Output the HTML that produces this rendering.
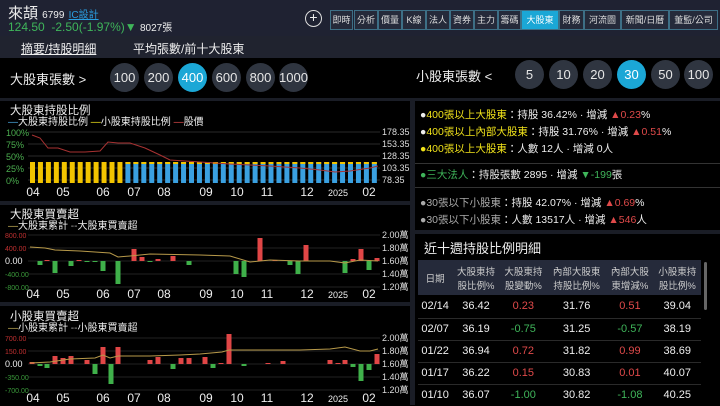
<!DOCTYPE html><html><head><meta charset="utf-8"><style>
*{margin:0;padding:0;box-sizing:border-box}
body{width:720px;height:405px;overflow:hidden;background:#000;font-family:"Liberation Sans","Noto Sans CJK TC",sans-serif;color:#eee;position:relative}
.a{position:absolute;white-space:nowrap}
.c{position:absolute;width:29px;height:29px;border-radius:50%;background:#2f3540;color:#e6e6e6;font-size:13px;line-height:29px;text-align:center}
.c.s{background:#1ba7d6;color:#fff}
.tab{position:absolute;top:10px;height:20px;border:1px solid #3d6f86;background:#252a3a;font-size:9px;line-height:18px;text-align:center;color:#ddd}
.tab.s{background:#1ba7d6;color:#fff}
.y{color:#f0e21a}.r{color:#e04a4a}.g{color:#3fb55a}.gr{color:#aaa}
.info{font-size:10.5px;left:420px}
.lg{font-size:10px;line-height:12px}
td{font-size:11px;text-align:center}
</style></head><body>
<div class="a" style="left:0;top:0;width:720px;height:36px;background:#1f2232"></div>
<div class="a" style="left:0;top:36px;width:720px;height:22px;background:#20232f"></div>
<div class="a" style="left:8px;top:2px;font-size:15px">來頡 <span style="font-size:10px">6799</span> <span style="font-size:10px;color:#2a9ee0;text-decoration:underline">IC設計</span></div>
<div class="a" style="left:8px;top:19px;font-size:12px;color:#3fb55a">124.50 &nbsp;-2.50(-1.97%)▼ <span style="color:#eee;font-size:10px">8027張</span></div>
<div class="a" style="left:305px;top:10px;width:17px;height:17px;border:1.5px solid #ddd;border-radius:50%;font-size:14px;line-height:13px;text-align:center">+</div>
<div class="tab" style="left:330px;width:23px">即時</div><div class="tab" style="left:354px;width:24px">分析</div><div class="tab" style="left:378px;width:24px">價量</div><div class="tab" style="left:402px;width:24px">K線</div><div class="tab" style="left:426px;width:24px">法人</div><div class="tab" style="left:450px;width:24px">資券</div><div class="tab" style="left:474px;width:24px">主力</div><div class="tab" style="left:498px;width:23px">籌碼</div><div class="tab s" style="left:521px;width:38px">大股東</div><div class="tab" style="left:559px;width:25px">財務</div><div class="tab" style="left:584px;width:37px">河流圖</div><div class="tab" style="left:621px;width:48px">新聞/日曆</div><div class="tab" style="left:669px;width:49px">董監/公司</div>
<div class="a" style="left:21px;top:40px;font-size:12px;text-decoration:underline">摘要/持股明細</div>
<div class="a" style="left:133px;top:40px;font-size:12px">平均張數/前十大股東</div>
<div class="a" style="left:10px;top:69px;font-size:13px">大股東張數 &gt;</div>
<div class="c" style="left:110px;top:63px">100</div><div class="c" style="left:144px;top:63px">200</div><div class="c s" style="left:178px;top:63px">400</div><div class="c" style="left:212px;top:63px">600</div><div class="c" style="left:246px;top:63px">800</div><div class="c" style="left:279px;top:63px">1000</div>
<div class="a" style="left:416px;top:66px;font-size:13px">小股東張數 &lt;</div>
<div class="c" style="left:515px;top:60px">5</div><div class="c" style="left:549px;top:60px">10</div><div class="c" style="left:583px;top:60px">20</div><div class="c s" style="left:617px;top:60px">30</div><div class="c" style="left:651px;top:60px">50</div><div class="c" style="left:684px;top:60px">100</div>
<div class="a" style="left:0;top:98px;width:720px;height:3px;background:#1a1d26"></div>
<div class="a" style="left:410px;top:98px;width:5px;height:307px;background:#1a1d26"></div>
<div class="a" style="left:0;top:201px;width:410px;height:4px;background:#1a1d26"></div>
<div class="a" style="left:0;top:302px;width:410px;height:4px;background:#1a1d26"></div>
<svg class="a" style="left:0;top:0" width="410" height="405" id="sv" font-family="Liberation Sans,Noto Sans CJK TC,sans-serif"></svg>
<div class="a" style="left:10px;top:102px;font-size:11.5px">大股東持股比例</div>
<div class="a lg" style="left:8px;top:117px"><span style="color:#4aa8e0">—</span>大股東持股比例 <span class="y">—</span>小股東持股比例 <span class="r">—</span>股價</div>
<div class="a" style="left:10px;top:206px;font-size:11.5px">大股東買賣超</div>
<div class="a lg" style="left:8px;top:221px"><span style="color:#c8b25a">—</span>大股東累計 <span class="gr">--</span>大股東買賣超</div>
<div class="a" style="left:10px;top:308px;font-size:11.5px">小股東買賣超</div>
<div class="a lg" style="left:8px;top:323px"><span style="color:#c8b25a">—</span>小股東累計 <span class="gr">--</span>小股東買賣超</div>
<div class="a info" style="top:107px">●<span class="y">400張以上大股東</span>：持股 36.42% · 增減 <span class="r">▲0.23</span>%</div>
<div class="a info" style="top:124px">●<span class="y">400張以上內部大股東</span>：持股 31.76% · 增減 <span class="r">▲0.51</span>%</div>
<div class="a info" style="top:141px"><span class="y">●400張以上大股東</span>：人數 12人 · 增減 0人</div>
<div class="a" style="left:415px;top:163px;width:305px;height:1px;background:#333"></div>
<div class="a info" style="top:167px"><span class="g">●三大法人</span>：持股張數 2895 · 增減 <span class="g">▼-199</span>張</div>
<div class="a" style="left:415px;top:187px;width:305px;height:1px;background:#333"></div>
<div class="a info" style="top:195px"><span class="gr">●30張以下小股東</span>：持股 42.07% · 增減 <span class="r">▲0.69</span>%</div>
<div class="a info" style="top:212px"><span class="gr">●30張以下小股東</span>：人數 13517人 · 增減 <span class="r">▲546</span>人</div>
<div class="a" style="left:415px;top:230px;width:305px;height:4px;background:#1a1d26"></div>
<div class="a" style="left:424px;top:238px;font-size:13px">近十週持股比例明細</div>
<div class="a" style="left:418px;top:260px;width:283px;height:35px;background:#252a3a"></div>
<div class="a" style="left:704px;top:262px;width:3px;height:48px;background:#666;border-radius:2px"></div>
<table class="a" style="left:418px;top:260px;width:283px;border-collapse:collapse">
<tr style="height:35px;color:#ccc"><td style="font-size:9.5px">日期</td><td style="font-size:9.5px">大股東持<br>股比例%</td><td style="font-size:9.5px">大股東持<br>股變動%</td><td style="font-size:9.5px">內部大股東<br>持股比例%</td><td style="font-size:9.5px">內部大股<br>東增減%</td><td style="font-size:9.5px">小股東持<br>股比例%</td></tr>
<tr style="height:23px;border-bottom:1px solid #2a2a2a"><td>02/14</td><td>36.42</td><td class="r">0.23</td><td>31.76</td><td class="r">0.51</td><td>39.04</td></tr>
<tr style="height:22px;border-bottom:1px solid #2a2a2a"><td>02/07</td><td>36.19</td><td class="g">-0.75</td><td>31.25</td><td class="g">-0.57</td><td>38.19</td></tr>
<tr style="height:22px;border-bottom:1px solid #2a2a2a"><td>01/22</td><td>36.94</td><td class="r">0.72</td><td>31.82</td><td class="r">0.99</td><td>38.69</td></tr>
<tr style="height:22px;border-bottom:1px solid #2a2a2a"><td>01/17</td><td>36.22</td><td class="r">0.15</td><td>30.83</td><td class="r">0.01</td><td>40.07</td></tr>
<tr style="height:22px"><td>01/10</td><td>36.07</td><td class="g">-1.00</td><td>30.82</td><td class="g">-1.08</td><td>40.25</td></tr>
</table>
<script>
var s='';
function T(x,y,t,c,f,a){s+='<text x="'+x+'" y="'+y+'" fill="'+c+'" font-size="'+f+'"'+(a?' text-anchor="'+a+'"':'')+'>'+t+'</text>';}
function L(x1,y1,x2,y2,c){s+='<line x1="'+x1+'" y1="'+y1+'" x2="'+x2+'" y2="'+y2+'" stroke="'+c+'" stroke-width="1"/>';}
function R(x,y,w,h,c){s+='<rect x="'+x+'" y="'+y+'" width="'+w+'" height="'+h+'" fill="'+c+'"/>';}
[132,144,156,168,180].forEach(function(y){L(28,y,380,y,'#2a2a2a')});
['100%','75%','50%','25%','0%'].forEach(function(t,i){T(6,136+i*12,t,'#4caf50',9)});
['178.35','153.35','128.35','103.35','78.35'].forEach(function(t,i){T(382,135+i*12,t,'#ddd',9)});
for(var i=0;i<44;i++){var x=30+i*7.95;if(i<12)R(x,162,5,21,'#f2c400');else{R(x,162,5,21,'#3aa0e0');R(x,162,5,2,'#f2c400');}}
s+='<polyline fill="none" stroke="#a83232" stroke-width="1" points="32,135 40,138 48,148 58,148 70,152 85,152 100,151 108,142 118,143 130,143 145,148 160,155 170,160 200,162 230,164 270,166 300,168 320,170 335,172 350,171 370,168 378,166"/>';
var xl=[['04',33],['05',63],['06',103],['07',134],['08',164],['09',206],['10',237],['11',267],['12',307],['2025',338],['02',369]];
function X(y){xl.forEach(function(a){T(a[1],y,a[0],'#eee',a[0]=='2025'?9:12,'middle')});}
X(196);
[235,248,261,274,287].forEach(function(y){L(28,y,380,y,'#222')});
T(5,238,'800.00','#c03030',7);T(5,251,'400.00','#c03030',7);T(5,264,'0.00','#eee',9);T(5,277,'-400.00','#3a9a3a',7);T(5,290,'-800.00','#3a9a3a',7);
['2.00萬','1.80萬','1.60萬','1.40萬','1.20萬'].forEach(function(t,i){T(382,238+i*13,t,'#ddd',9)});
function B(z,arr){arr.forEach(function(b){var h=b[1];if(h>0)R(b[0]-2.5,z-h,5,h,'#e04646');else if(h<0)R(b[0]-2.5,z,5,-h,'#3fb04a');});}
B(261,[[40,-4],[47,1],[55,-12],[71,-5],[79,1],[87,-1],[95,-1],[103,-10],[118,-23],[134,12],[142,4],[150,-1],[158,2],[173,5],[189,-4],[236,-13],[244,-16],[260,23],[275,1],[290,-4],[298,-13],[306,16],[345,-12],[353,2],[361,12],[369,-9],[377,3]]);
s+='<polyline fill="none" stroke="#b89a4a" stroke-width="1" points="30,247 45,248 55,250 80,251 110,253 118,257 130,256 150,254 200,255 230,256 250,262 270,260 300,261 330,261 345,263 360,260 378,261"/>';
X(298);
[338,351,364,377,390].forEach(function(y){L(28,y,380,y,'#222')});
T(5,341,'700.00','#c03030',7);T(5,354,'150.00','#c03030',7);T(5,367,'0.00','#eee',9);T(5,380,'-350.00','#3a9a3a',7);T(5,393,'-700.00','#3a9a3a',7);
['2.00萬','1.80萬','1.60萬','1.40萬','1.20萬'].forEach(function(t,i){T(382,341+i*13,t,'#ddd',9)});
B(364,[[32,2],[40,-2],[47,-4],[55,8],[63,6],[71,8],[87,4],[95,-10],[103,17],[111,-20],[118,17],[150,4],[158,7],[173,-5],[181,6],[189,6],[205,7],[213,-4],[221,1],[229,30],[244,-2],[268,1],[283,3],[330,4],[338,1],[345,4],[353,-3],[361,-17],[369,-6],[377,10]]);
s+='<polyline fill="none" stroke="#b89a4a" stroke-width="1" points="30,363 50,362 70,359 95,358 103,355 110,358 118,356 150,356 180,355 200,354 222,352 229,350 260,350 300,350 330,349 345,347 360,351 370,351 378,349"/>';
X(402);
document.getElementById('sv').innerHTML=s;
</script>
</body></html>
